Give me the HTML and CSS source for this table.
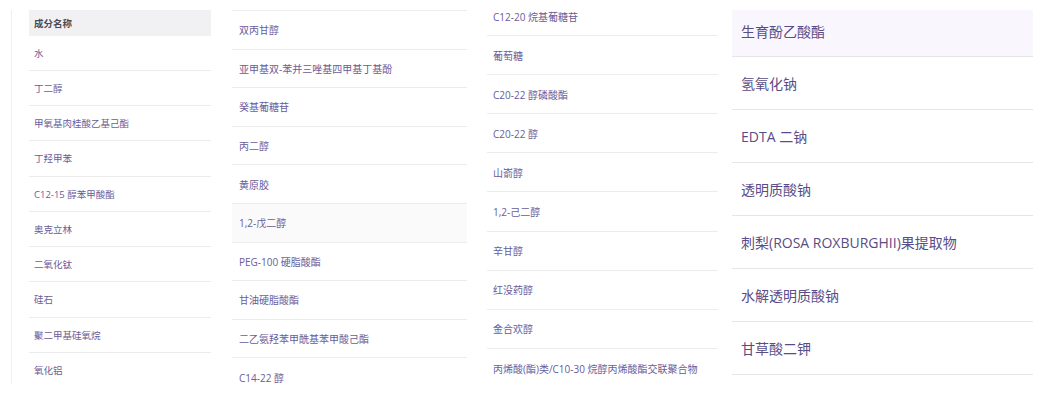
FILE: index.html
```html
<!DOCTYPE html>
<html lang="zh-CN">
<head>
<meta charset="utf-8">
<title>成分名称</title>
<link rel="stylesheet" href="styles.css">
</head>
<body>
<div class="page">
  <div class="col col1">
    <div class="head">成分名称</div>
    <div class="row">水</div>
    <div class="row">丁二醇</div>
    <div class="row">甲氧基肉桂酸乙基己酯</div>
    <div class="row">丁羟甲苯</div>
    <div class="row">C12-15 醇苯甲酸酯</div>
    <div class="row">奥克立林</div>
    <div class="row">二氧化钛</div>
    <div class="row">硅石</div>
    <div class="row">聚二甲基硅氧烷</div>
    <div class="row last">氧化铝</div>
  </div>
  <div class="col col2">
    <div class="row">双丙甘醇</div>
    <div class="row">亚甲基双-苯并三唑基四甲基丁基酚</div>
    <div class="row">癸基葡糖苷</div>
    <div class="row">丙二醇</div>
    <div class="row">黄原胶</div>
    <div class="row hover">1,2-戊二醇</div>
    <div class="row">PEG-100 硬脂酸酯</div>
    <div class="row">甘油硬脂酸酯</div>
    <div class="row">二乙氨羟苯甲酰基苯甲酸己酯</div>
    <div class="row">C14-22 醇</div>
  </div>
  <div class="col col3">
    <div class="row">C12-20 烷基葡糖苷</div>
    <div class="row">葡萄糖</div>
    <div class="row">C20-22 醇磷酸酯</div>
    <div class="row">C20-22 醇</div>
    <div class="row">山嵛醇</div>
    <div class="row">1,2-己二醇</div>
    <div class="row">辛甘醇</div>
    <div class="row">红没药醇</div>
    <div class="row">金合欢醇</div>
    <div class="row last">丙烯酸(酯)类/C10-30 烷醇丙烯酸酯交联聚合物</div>
  </div>
  <div class="col col4">
    <div class="row first">生育酚乙酸酯</div>
    <div class="row">氢氧化钠</div>
    <div class="row">EDTA 二钠</div>
    <div class="row">透明质酸钠</div>
    <div class="row">刺梨(ROSA ROXBURGHII)果提取物</div>
    <div class="row">水解透明质酸钠</div>
    <div class="row">甘草酸二钾</div>
  </div>
</div>
</body>
</html>
```

FILE: styles.css
```css
html, body {
  margin: 0;
  padding: 0;
  background: #ffffff;
}

body {
  font-family: "Open Sans", "Noto Sans CJK SC", sans-serif;
  color: #6a5c98;
}

.page {
  display: flex;
  align-items: flex-start;
  height: 394px;
  overflow: hidden;
}

.col {
  display: flex;
  flex-direction: column;
  flex: none;
}

.row {
  display: flex;
  align-items: center;
  box-sizing: border-box;
  border-bottom: 1px solid #ececee;
  white-space: nowrap;
  flex: none;
}

.col1 {
  margin-left: 11px;
  margin-top: 10px;
  height: 374px;
  overflow: hidden;
  border-left: 1px solid #efeff1;
  padding-left: 17px;
  width: 182px;
  font-size: 9.5px;
}

.col1 .head {
  flex: none;
  height: 25.5px;
  background: #f1f1f3;
  display: flex;
  align-items: center;
  padding-left: 5px;
  font-weight: bold;
  color: #4a4a52;
}

.col1 .row {
  height: 35.25px;
  padding-left: 5px;
}

.col1 .row.last {
  border-bottom: none;
}

.col2 {
  margin-left: 21px;
  margin-top: 10px;
  width: 235px;
  font-size: 10px;
  border-top: 1px solid #ececee;
}

.col2 .row {
  height: 38.6px;
  padding-left: 7px;
}

.col2 .row.hover {
  background: #fafafa;
}

.col3 {
  margin-left: 20px;
  margin-top: -3px;
  width: 231px;
  font-size: 10px;
}

.col3 .row {
  height: 39.1px;
  padding-left: 6px;
}

.col3 .row.last {
  border-bottom: none;
}

.col4 {
  margin-left: 14px;
  margin-top: 10px;
  width: 301px;
  font-size: 14px;
  color: #5a4c86;
}

.col4 .row {
  height: 53px;
  padding-left: 9px;
  border-bottom-color: #e6e6ea;
}

.col4 .row.first {
  height: 47px;
  background: #f9f7fd;
  padding-bottom: 4px;
}
```
